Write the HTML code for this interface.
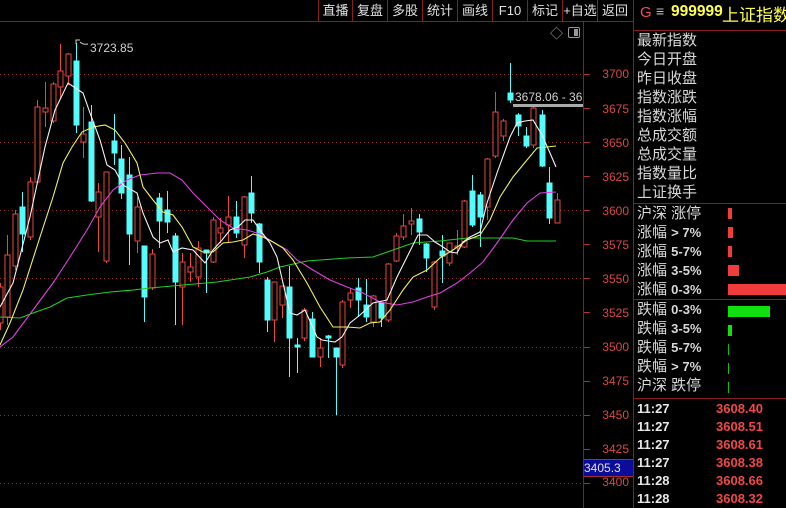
<!DOCTYPE html><html><head><meta charset="utf-8"><style>
body{margin:0;width:786px;height:508px;background:#000;overflow:hidden;position:relative;font-family:"Liberation Sans","Noto Sans CJK SC",sans-serif;color:#d8d8d8}
.a{position:absolute;white-space:nowrap}
.btn{position:absolute;top:0;height:21px;line-height:21px;font-size:13px;color:#e0e0e0;text-align:center;border-right:1px solid #8a1c1c}
.lb{position:absolute;left:637px;font-size:15px;line-height:19px;color:#d8d8d8}
.t{position:absolute;left:637px;font-size:13px;font-weight:bold;color:#e8e8e8}
.v{position:absolute;left:716px;font-size:13px;font-weight:bold;color:#f04848}
.ax{position:absolute;right:157px;font-size:12px;color:#d84848}
</style></head><body>
<div class="a" style="left:0;top:21px;width:633px;height:1px;background:#8a1c1c"></div>
<div class="a" style="left:633px;top:0;width:1px;height:508px;background:#8a1c1c"></div>
<div class="a" style="left:583px;top:22px;width:1px;height:486px;background:#8a1c1c"></div>
<div class="a" style="left:318px;top:0;width:1px;height:21px;background:#8a1c1c"></div>
<div class="btn" style="left:319px;width:33px">直播</div>
<div class="btn" style="left:353px;width:34px">复盘</div>
<div class="btn" style="left:388px;width:34px">多股</div>
<div class="btn" style="left:423px;width:34px">统计</div>
<div class="btn" style="left:458px;width:34px">画线</div>
<div class="btn" style="left:493px;width:34px">F10</div>
<div class="btn" style="left:528px;width:34px">标记</div>
<div class="btn" style="left:563px;width:34px">+自选</div>
<div class="btn" style="left:598px;width:34px;border:none">返回</div>
<div class="a" style="left:640px;top:4px;font-size:15px;color:#f05050">G</div>
<div class="a" style="left:656px;top:3px;font-size:14px;color:#c0c0c0">≡</div>
<div class="a" style="left:671px;top:3px;font-size:15.5px;font-weight:bold;color:#ffff50">999999</div>
<div class="a" style="left:722px;top:1px;font-size:17px;color:#ffff50">上证指数</div>
<div class="a" style="left:634px;top:30px;width:152px;height:1px;background:#8a1c1c"></div>
<div class="a" style="left:550px;top:23px;font-size:13px;color:#aaa">◇</div>
<div class="a" style="left:568px;top:27px;width:10px;height:9px;border:1px solid #999;border-radius:2px"><div style="position:absolute;right:1px;top:1px;width:4px;height:7px;background:#999"></div></div>

<div class="lb" style="top:31px">最新指数</div><div class="lb" style="top:50px">今日开盘</div><div class="lb" style="top:69px">昨日收盘</div><div class="lb" style="top:88px">指数涨跌</div><div class="lb" style="top:107px">指数涨幅</div><div class="lb" style="top:126px">总成交额</div><div class="lb" style="top:145px">总成交量</div><div class="lb" style="top:164px">指数量比</div><div class="lb" style="top:183px">上证换手</div>
<div class="a" style="left:634px;top:203px;width:152px;height:1px;background:#8a1c1c"></div>
<div class="lb" style="top:204px">沪深 涨停</div><div class="lb" style="top:223px">涨幅 <b style="font-size:13px">&gt; 7%</b></div><div class="lb" style="top:242px">涨幅 <b style="font-size:13px">5-7%</b></div><div class="lb" style="top:261px">涨幅 <b style="font-size:13px">3-5%</b></div><div class="lb" style="top:280px">涨幅 <b style="font-size:13px">0-3%</b></div>
<div class="a" style="left:634px;top:299px;width:152px;height:1px;background:#8a1c1c"></div>
<div class="lb" style="top:300px">跌幅 <b style="font-size:13px">0-3%</b></div><div class="lb" style="top:319px">跌幅 <b style="font-size:13px">3-5%</b></div><div class="lb" style="top:338px">跌幅 <b style="font-size:13px">5-7%</b></div><div class="lb" style="top:357px">跌幅 <b style="font-size:13px">&gt; 7%</b></div><div class="lb" style="top:376px">沪深 跌停</div>
<div class="a" style="left:728px;top:208px;width:4px;height:11px;background:#f03c3c"></div>
<div class="a" style="left:728px;top:227px;width:5px;height:11px;background:#f03c3c"></div>
<div class="a" style="left:728px;top:246px;width:4px;height:11px;background:#f03c3c"></div>
<div class="a" style="left:728px;top:265px;width:11px;height:11px;background:#f03c3c"></div>
<div class="a" style="left:728px;top:284px;width:58px;height:11px;background:#f03c3c"></div>
<div class="a" style="left:728px;top:306px;width:42px;height:11px;background:#10e010"></div>
<div class="a" style="left:728px;top:325px;width:4px;height:11px;background:#10e010"></div>
<div class="a" style="left:728px;top:344px;width:1px;height:11px;background:#10c010"></div>
<div class="a" style="left:728px;top:363px;width:1px;height:11px;background:#10c010"></div>
<div class="a" style="left:728px;top:382px;width:1px;height:11px;background:#10c010"></div>
<div class="a" style="left:634px;top:398px;width:152px;height:1px;background:#8a1c1c"></div>
<div class="t" style="top:401px">11:27</div><div class="v" style="top:401px">3608.40</div>
<div class="t" style="top:419px">11:27</div><div class="v" style="top:419px">3608.51</div>
<div class="t" style="top:437px">11:27</div><div class="v" style="top:437px">3608.61</div>
<div class="t" style="top:455px">11:27</div><div class="v" style="top:455px">3608.38</div>
<div class="t" style="top:473px">11:28</div><div class="v" style="top:473px">3608.66</div>
<div class="t" style="top:491px">11:28</div><div class="v" style="top:491px">3608.32</div>

<div class="ax" style="top:67px">3700</div><div class="ax" style="top:102px">3675</div><div class="ax" style="top:136px">3650</div><div class="ax" style="top:170px">3625</div><div class="ax" style="top:204px">3600</div><div class="ax" style="top:238px">3575</div><div class="ax" style="top:272px">3550</div><div class="ax" style="top:306px">3525</div><div class="ax" style="top:340px">3500</div><div class="ax" style="top:374px">3475</div><div class="ax" style="top:408px">3450</div><div class="ax" style="top:442px">3425</div><div class="ax" style="top:475px">3400</div>
<div class="a" style="left:584px;top:459px;width:49px;height:16px;background:#0c0c9a;border-top:1px solid #a03030;border-bottom:1px solid #a03030;font-size:12px;line-height:16px;color:#e0e0e0">3405.3</div>

<svg class="a" style="left:0;top:0" width="634" height="508" id="s">
<g stroke="#8a2a2a" stroke-dasharray="1,3" stroke-width="1">
<line x1="0" y1="74.5" x2="583" y2="74.5"/><line x1="0" y1="142.5" x2="583" y2="142.5"/><line x1="0" y1="210.5" x2="583" y2="210.5"/><line x1="0" y1="278.5" x2="583" y2="278.5"/><line x1="0" y1="347.5" x2="583" y2="347.5"/><line x1="0" y1="415.5" x2="583" y2="415.5"/><line x1="0" y1="483.5" x2="583" y2="483.5"/></g>
<g stroke="#b03030"><path d="M584 74.5h6M584 108.5h6M584 142.5h6M584 176.5h6M584 210.5h6M584 244.5h6M584 278.5h6M584 312.5h6M584 347.5h6M584 381.5h6M584 415.5h6M584 449.5h6M584 483.5h6"/></g>
<g id="c"></g>
<g fill="none" stroke-width="1.1">
<polyline stroke="#20d020" points="0,317 20,318 33,313 50,307 67,298 87,295 110,292 133,290 150,288 183,285 217,282 250,277 267,272 280,267 307,261 347,258 373,257 393,250 413,243 440,241 467,238 513,238 527,241 556,241"/>
<polyline stroke="#e040e0" points="0,347 13,337 33,310 53,283 70,257 87,230 100,207 113,190 127,180 140,175 157,173 170,173 182,180 193,193 207,207 220,220 233,228 247,230 260,234 273,242 287,250 297,260 313,270 330,280 347,287 363,293 380,302 397,305 413,302 427,297 440,293 457,283 470,273 483,262 497,243 513,220 527,203 540,193 556,192"/>
<polyline stroke="#f0f060" points="0,345 10,323 23,290 40,237 53,197 63,163 72,147 82,132 93,127 105,125 115,130 125,143 137,163 143,187 153,200 163,212 173,215 182,227 193,247 203,252 213,252 223,243 233,242 243,240 253,234 263,237 273,242 283,248 293,260 307,283 320,307 333,327 347,327 360,328 370,323 380,322 390,310 403,290 413,277 427,270 440,258 453,250 467,240 480,235 490,220 500,197 513,177 527,160 537,148 547,147 556,146"/>
<polyline stroke="#f4f4f4" points="0,307 13,283 30,217 45,147 55,110 68,83 83,93 90,113 100,140 107,165 115,170 123,185 137,193 143,213 153,237 160,243 168,240 173,252 182,248 193,250 205,263 213,250 222,240 230,230 238,227 245,220 253,220 260,230 270,243 277,257 283,283 290,313 297,315 305,310 317,337 322,340 335,342 342,337 350,323 360,315 373,303 387,300 397,277 407,257 418,235 427,235 435,242 443,247 450,252 457,253 463,242 470,237 480,232 487,203 497,173 510,137 517,123 525,121 533,120 542,135 550,153 556,167"/>
</g>
<path d="M76 44V40h4M80 42q3 3 8 2" stroke="#ccc" fill="none"/>
<text x="90" y="52" fill="#d0d0d0" font-size="12" font-family="Liberation Sans">3723.85</text>
<text x="515" y="101" fill="#d0d0d0" font-size="12" font-family="Liberation Sans">3678.06 - 36</text>
<rect x="513" y="104" width="70" height="3" fill="#aaa"/>
</svg>
<script>
var d=`R 0,287,323,283,330
R 7.3,255,317,235,325
R 15,214,266,210,270
C 22.3,207,234,192,252
R 30,182,237,177,240
R 37.3,107,182,100,183
R 45,108,112,82,127
R 52.7,84,121,82,123
R 60.3,71,87,44,98
R 68.3,54,76,53,85
C 76,61,125,43,133
R 83.3,134,142,107,158
C 91,122,201,105,202
R 98.3,192,217,183,252
R 106,172,261,172,263
C 114,141,153,114,165
C 121,159,193,145,199
C 129.3,175,234,157,265
R 137,207,241,197,253
C 144.3,246,297,246,322
R 152.3,254,288,249,290
C 159.3,198,221,193,248
C 167.3,210,222,191,233
C 175,236,282,233,325
R 182.3,262,287,253,325
R 190,267,272,253,282
R 198.3,248,277,241,287
C 205.7,250,253,250,293
R 213.3,220,262,217,263
R 220.3,228,233,218,243
R 228.3,217,225,196,242
C 236.3,217,233,201,238
R 243.7,197,245,196,258
C 251.3,193,213,176,223
C 259.3,224,262,223,273
C 266.7,280,320,277,332
R 274.3,282,320,282,342
R 281.7,286,305,286,318
C 289.3,287,338,266,377
C 297.3,345,347,338,373
R 304.3,310,338,308,341
C 312.3,319,357,312,357
R 320,348,357,338,367
C 327.7,336,338,335,358
C 335.7,348,357,348,415
R 342.3,302,365,300,368
R 350.3,293,300,288,308
C 358.3,288,300,278,317
C 366,305,317,279,322
R 373.3,296,322,295,327
C 380.7,303,318,302,327
R 388.3,264,320,263,322
R 396,236,261,233,262
R 403.3,226,237,214,240
R 411,221,224,208,235
C 419,219,232,214,245
C 426,244,258,243,272
R 434,262,307,261,310
C 441.7,251,256,235,283
R 449.3,243,263,243,266
R 457.3,246,248,230,255
R 464.3,201,247,200,248
C 472.3,191,225,175,227
C 480,195,217,192,247
R 487.3,159,207,158,220
R 495.3,112,156,92,158
R 502.7,121,136,119,141
C 510,93,100,63,103
C 517.7,115,126,113,136
C 525.7,136,146,127,148
R 533.3,108,145,107,148
C 541.7,115,166,110,167
C 548.7,183,218,167,224
R 556.7,200,223,193,223`;
var h='';d.split('\n').forEach(function(l){var t=l[0],v=l.slice(2).split(',').map(Number),x=Math.round(v[0])+.5,col=t=='R'?'#e8483f':'#54fcfc';
h+='<line x1="'+x+'" y1="'+v[3]+'" x2="'+x+'" y2="'+v[4]+'" stroke="'+col+'"/>';
h+='<rect x="'+(x-2.5)+'" y="'+v[1]+'" width="5" height="'+Math.max(1,v[2]-v[1])+'" fill="'+(t=='R'?'#000':col)+'" stroke="'+col+'" stroke-width="1"/>';});
document.getElementById('c').innerHTML=h;
</script>
</body></html>
